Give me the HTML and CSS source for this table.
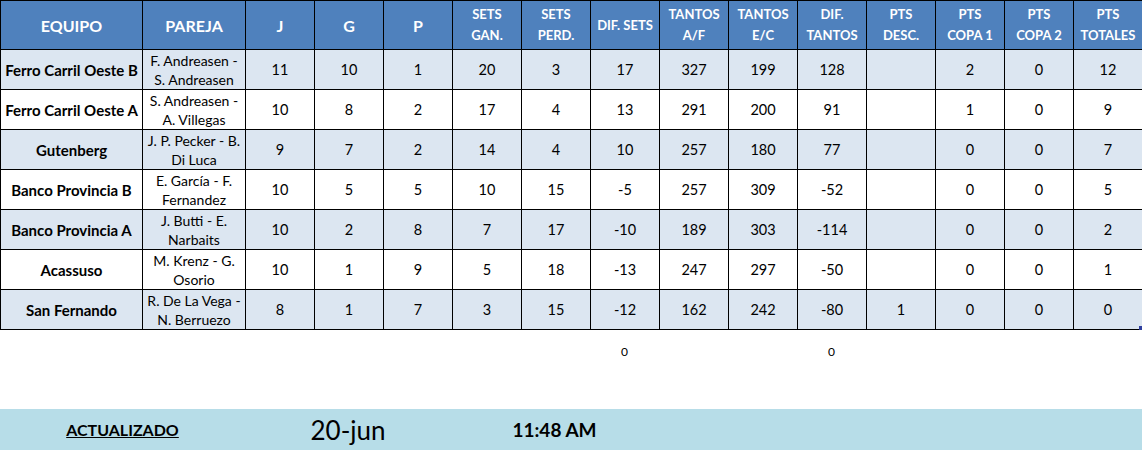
FILE: index.html
```html
<!DOCTYPE html>
<html lang="es">
<head>
<meta charset="utf-8">
<title>Posiciones</title>
<link rel="stylesheet" href="styles.css">
</head>
<body>
<table class="standings">
  <colgroup>
    <col class="c-team"><col class="c-pair">
    <col class="c-n"><col class="c-n"><col class="c-n"><col class="c-n"><col class="c-n"><col class="c-n"><col class="c-n"><col class="c-n"><col class="c-n"><col class="c-n"><col class="c-n"><col class="c-n"><col class="c-n">
  </colgroup>
  <thead>
    <tr>
      <th class="big">EQUIPO</th>
      <th class="big">PAREJA</th>
      <th class="big">J</th>
      <th class="big">G</th>
      <th class="big">P</th>
      <th>SETS<br>GAN.</th>
      <th>SETS<br>PERD.</th>
      <th>DIF. SETS</th>
      <th>TANTOS<br>A/F</th>
      <th>TANTOS<br>E/C</th>
      <th>DIF.<br>TANTOS</th>
      <th>PTS<br>DESC.</th>
      <th>PTS<br>COPA 1</th>
      <th>PTS<br>COPA 2</th>
      <th>PTS<br>TOTALES</th>
    </tr>
  </thead>
  <tbody>
    <tr class="alt">
      <td class="team">Ferro Carril Oeste B</td><td class="pair">F. Andreasen -<br>S. Andreasen</td>
      <td>11</td><td>10</td><td>1</td><td>20</td><td>3</td><td>17</td><td>327</td><td>199</td><td>128</td><td></td><td>2</td><td>0</td><td>12</td>
    </tr>
    <tr>
      <td class="team">Ferro Carril Oeste A</td><td class="pair">S. Andreasen -<br>A. Villegas</td>
      <td>10</td><td>8</td><td>2</td><td>17</td><td>4</td><td>13</td><td>291</td><td>200</td><td>91</td><td></td><td>1</td><td>0</td><td>9</td>
    </tr>
    <tr class="alt">
      <td class="team">Gutenberg</td><td class="pair">J. P. Pecker - B.<br>Di Luca</td>
      <td>9</td><td>7</td><td>2</td><td>14</td><td>4</td><td>10</td><td>257</td><td>180</td><td>77</td><td></td><td>0</td><td>0</td><td>7</td>
    </tr>
    <tr>
      <td class="team">Banco Provincia B</td><td class="pair">E. García - F.<br>Fernandez</td>
      <td>10</td><td>5</td><td>5</td><td>10</td><td>15</td><td>-5</td><td>257</td><td>309</td><td>-52</td><td></td><td>0</td><td>0</td><td>5</td>
    </tr>
    <tr class="alt">
      <td class="team">Banco Provincia A</td><td class="pair">J. Butti - E.<br>Narbaits</td>
      <td>10</td><td>2</td><td>8</td><td>7</td><td>17</td><td>-10</td><td>189</td><td>303</td><td>-114</td><td></td><td>0</td><td>0</td><td>2</td>
    </tr>
    <tr>
      <td class="team">Acassuso</td><td class="pair">M. Krenz - G.<br>Osorio</td>
      <td>10</td><td>1</td><td>9</td><td>5</td><td>18</td><td>-13</td><td>247</td><td>297</td><td>-50</td><td></td><td>0</td><td>0</td><td>1</td>
    </tr>
    <tr class="alt">
      <td class="team">San Fernando</td><td class="pair">R. De La Vega -<br>N. Berruezo</td>
      <td>8</td><td>1</td><td>7</td><td>3</td><td>15</td><td>-12</td><td>162</td><td>242</td><td>-80</td><td>1</td><td>0</td><td>0</td><td class="last">0<span class="handle"></span></td>
    </tr>
  </tbody>
</table>

<div class="totals">
  <span></span><span></span><span></span><span></span><span></span><span></span><span></span>
  <span>0</span>
  <span></span><span></span>
  <span>0</span>
  <span></span><span></span><span></span><span></span>
</div>

<div class="updated">
  <span class="label">ACTUALIZADO</span>
  <span class="date">20-jun</span>
  <span class="time">11:48 AM</span>
</div>
</body>
</html>
```

FILE: styles.css
```css
html, body {
  margin: 0;
  padding: 0;
  background: #ffffff;
  width: 1142px;
  height: 450px;
  overflow: hidden;
  font-family: Lato, "Liberation Sans", sans-serif;
  color: #000000;
}

.standings {
  border-collapse: collapse;
  table-layout: fixed;
  width: 1142px;
}

.c-team { width: 142px; }
.c-pair { width: 103px; }
.c-n { width: 69px; }

.standings th,
.standings td {
  border: 1px solid #000000;
  text-align: center;
  vertical-align: middle;
  padding: 0;
}

.standings th {
  background: #4f81bd;
  color: #ffffff;
  height: 48px;
  font-size: 13px;
  font-weight: 700;
  line-height: 21px;
}

.standings th.big {
  font-size: 16px;
}

.standings td {
  height: 39px;
  font-size: 14.5px;
  line-height: 18px;
}

.standings tr.alt td {
  background: #dce6f1;
}

.standings td.team {
  font-weight: 700;
  font-size: 15px;
  white-space: nowrap;
}

.standings td.pair {
  font-size: 14px;
  line-height: 19px;
  white-space: nowrap;
}

.standings td.last {
  position: relative;
}

.handle {
  position: absolute;
  right: -1px;
  bottom: -1px;
  width: 4px;
  height: 4px;
  background: #2f3f9f;
}

.totals {
  display: grid;
  grid-template-columns: 142px 103px repeat(13, 69px);
  height: 42px;
  align-items: center;
  font-size: 12px;
  text-align: center;
}

.updated {
  margin-top: 37px;
  height: 41px;
  background: #b7dde8;
  display: grid;
  grid-template-columns: 245px 206px 207px;
  align-items: center;
  text-align: center;
}

.updated .label {
  font-size: 16px;
  font-weight: 700;
  text-decoration: underline;
}

.updated .date {
  font-size: 26px;
}

.updated .time {
  font-size: 19px;
  font-weight: 700;
}
```
